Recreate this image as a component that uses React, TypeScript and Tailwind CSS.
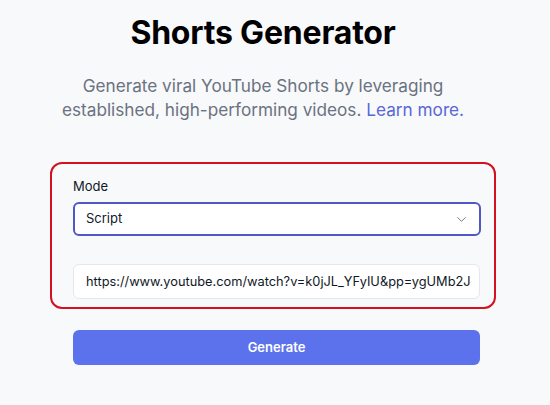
import React from "react";
import { ChevronDown } from "lucide-react";

export default function App() {
  return (
    <div
      className="w-[550px] h-[405px] overflow-hidden bg-[#f8f9fb] text-gray-900"
      style={{ fontFamily: "Inter, 'Noto Sans', sans-serif" }}
    >
      <div className="pt-[15px] pr-[24px] text-center">
        <h1 className="text-[32px] leading-[36px] font-bold tracking-[-0.2px] text-black">
          Shorts Generator
        </h1>
        <p className="mt-[23px] text-[17.2px] leading-[24px] text-[#6b7280]">
          Generate viral YouTube Shorts by leveraging
          <br />
          established, high-performing videos.{" "}
          <a className="text-[#5a67d8]" href="#">
            Learn more.
          </a>
        </p>
      </div>

      <div className="mt-[40px] ml-[50px] w-[446px] h-[147px] rounded-[12px] border-2 border-[#d4111f] pl-[21px] pr-[14px] pt-[12px]">
        <label className="block text-[13px] leading-[20px] text-gray-900">Mode</label>
        <div className="mt-[6px] flex h-[34px] w-[408px] items-center justify-between rounded-[6px] border-2 border-[#5157c4] bg-white pl-[11px] pr-[10px]">
          <span className="text-[13px] text-gray-900">Script</span>
          <ChevronDown className="h-[15px] w-[15px] text-gray-500" strokeWidth={1.5} />
        </div>
        <input
          readOnly
          value="https://www.youtube.com/watch?v=k0jJL_YFyIU&pp=ygUMb2JqZWN0aXZlIGFp"
          className="mt-[28px] block h-[35px] w-[407px] rounded-[6px] border border-[#e5e7eb] bg-white pl-3 pr-[8px] text-[12.8px] text-gray-900 outline-none"
        />
      </div>

      <button className="mt-[21px] ml-[73px] flex h-[35px] w-[407px] items-center justify-center rounded-[6px] bg-[#5c72ec] text-[13px] font-semibold text-white">
        Generate
      </button>
    </div>
  );
}
